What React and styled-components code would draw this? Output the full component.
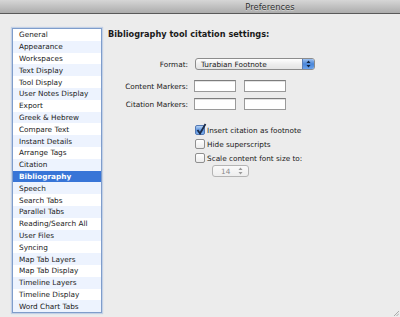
import React from "react";
import styled, { createGlobalStyle } from "styled-components";

const GlobalStyle = createGlobalStyle`
  html, body {
    margin: 0;
    padding: 0;
    background: #ececec;
    font-family: "DejaVu Sans", "Liberation Sans", sans-serif;
  }
  #root {
    width: 400px;
    height: 317px;
    overflow: hidden;
  }
`;

const Window = styled.div`
  width: 400px;
  height: 317px;
  display: flex;
  flex-direction: column;
  background: #ececec;
  position: relative;
`;

const TitleBar = styled.div`
  height: 13px;
  flex: none;
  display: flex;
  justify-content: center;
  align-items: center;
  padding-left: 140px;
  background: linear-gradient(#d6d6d6, #acacac);
  border-bottom: 1px solid #595959;
  font-size: 8.4px;
  color: #2e2e2e;
  text-shadow: 0 1px 0 rgba(255, 255, 255, 0.4);
`;

const Body = styled.div`
  flex: 1;
  display: flex;
  gap: 6px;
  padding: 14px 0 0 12px;
`;

const List = styled.ul`
  list-style: none;
  margin: 0;
  padding: 0;
  width: 88px;
  height: 283px;
  border: 1px solid #7f9dcb;
  box-shadow: 0 0 1px 1px rgba(120, 160, 220, 0.35);
  background: #fff;
  display: flex;
  flex-direction: column;
`;

const Row = styled.li`
  flex: 1;
  display: flex;
  align-items: center;
  padding-left: 6px;
  font-size: 7.3px;
  color: ${(p) => (p.$selected ? "#fff" : "#1a1a1a")};
  font-weight: ${(p) => (p.$selected ? "bold" : "normal")};
  background: ${(p) =>
    p.$selected ? "#3875d7" : p.$odd ? "#edf3fe" : "#fff"};
`;

const Pane = styled.div`
  flex: 1;
  display: flex;
  flex-direction: column;
`;

const Heading = styled.div`
  font-size: 8.2px;
  font-weight: bold;
  color: #1a1a1a;
  margin-top: 1px;
`;

const Form = styled.div`
  display: grid;
  grid-template-columns: 80px auto;
  column-gap: 6px;
  align-items: center;
  margin-top: 19px;
`;

const Label = styled.div`
  font-size: 7.3px;
  color: #1a1a1a;
  text-align: right;
  margin-top: ${(p) => p.$top || 0}px;
`;

const Controls = styled.div`
  display: flex;
  gap: 8px;
  margin-top: ${(p) => p.$top || 0}px;
`;

const Popup = styled.div`
  width: 120px;
  height: 12px;
  box-sizing: border-box;
  border: 1px solid #8c8c8c;
  border-radius: 3px;
  background: linear-gradient(#ffffff, #eeeeee 50%, #e4e4e4);
  display: flex;
  align-items: center;
  justify-content: space-between;
  font-size: 7.3px;
  color: #1a1a1a;
  padding-left: 5px;
  overflow: hidden;
  margin-left: 1px;
`;

const PopupArrows = styled.div`
  width: 11px;
  height: 100%;
  background: linear-gradient(#9dc1f0, #4a86d8 50%, #6aa3ee);
  border-left: 1px solid #5b7fb6;
  display: flex;
  align-items: center;
  justify-content: center;
`;

const Field = styled.div`
  width: 42px;
  height: 12px;
  box-sizing: border-box;
  background: #fff;
  border: 1px solid #9a9a9a;
  border-top-color: #7d7d7d;
  box-shadow: inset 0 1px 0 #e2e2e2;
`;

const Checks = styled.div`
  display: flex;
  flex-direction: column;
  gap: 4px;
  margin: 15px 0 0 87px;
`;

const CheckRow = styled.label`
  display: flex;
  align-items: center;
  gap: 2px;
  font-size: 7.3px;
  color: #1a1a1a;
  height: 10px;
`;

const Box = styled.span`
  width: 10px;
  height: 10px;
  box-sizing: border-box;
  border-radius: 2px;
  border: 1px solid ${(p) => (p.$checked ? "#5479b4" : "#8f8f8f")};
  background: ${(p) =>
    p.$checked
      ? "linear-gradient(#b5d2f4, #5a92de 55%, #7fb0ef)"
      : "linear-gradient(#ffffff, #ececec)"};
  position: relative;
  flex: none;
`;

const Tick = styled.svg`
  position: absolute;
  left: 0px;
  top: -3px;
`;

const Stepper = styled.div`
  align-self: flex-start;
  width: 37px;
  height: 12px;
  box-sizing: border-box;
  border: 1px solid #b4b4b4;
  border-radius: 3px;
  background: linear-gradient(#fafafa, #eeeeee);
  display: flex;
  align-items: center;
  justify-content: space-between;
  padding: 0 5px 0 8px;
  font-size: 7.3px;
  color: #8a8a8a;
  margin: 2px 0 0 104px;
`;

const Grip = styled.svg`
  position: absolute;
  right: 1px;
  bottom: 1px;
`;

const Arrows = ({ color }) => (
  <svg width="5" height="8" viewBox="0 0 5 8">
    <path d="M2.5 0.5 L4.5 3 L0.5 3 Z" fill={color} />
    <path d="M2.5 7.5 L4.5 5 L0.5 5 Z" fill={color} />
  </svg>
);

const items = [
  "General",
  "Appearance",
  "Workspaces",
  "Text Display",
  "Tool Display",
  "User Notes Display",
  "Export",
  "Greek & Hebrew",
  "Compare Text",
  "Instant Details",
  "Arrange Tags",
  "Citation",
  "Bibliography",
  "Speech",
  "Search Tabs",
  "Parallel Tabs",
  "Reading/Search All",
  "User Files",
  "Syncing",
  "Map Tab Layers",
  "Map Tab Display",
  "Timeline Layers",
  "Timeline Display",
  "Word Chart Tabs",
];

const Check = ({ checked, children }) => (
  <CheckRow>
    <Box $checked={checked}>
      {checked && (
        <Tick width="11" height="12" viewBox="0 0 11 12">
          <path
            d="M1.5 7 L4 10.5 L9.5 1"
            fill="none"
            stroke="#1b2c4a"
            strokeWidth="1.8"
          />
        </Tick>
      )}
    </Box>
    {children}
  </CheckRow>
);

export default function App() {
  return (
    <>
      <GlobalStyle />
      <Window>
        <TitleBar>Preferences</TitleBar>
        <Body>
          <List>
            {items.map((name, i) => (
              <Row key={name} $odd={i % 2 === 1} $selected={name === "Bibliography"}>
                {name}
              </Row>
            ))}
          </List>
          <Pane>
            <Heading>Bibliography tool citation settings:</Heading>
            <Form>
              <Label>Format:</Label>
              <Controls>
                <Popup>
                  Turabian Footnote
                  <PopupArrows>
                    <Arrows color="#10233f" />
                  </PopupArrows>
                </Popup>
              </Controls>
              <Label $top={10}>Content Markers:</Label>
              <Controls $top={10}>
                <Field />
                <Field />
              </Controls>
              <Label $top={6}>Citation Markers:</Label>
              <Controls $top={6}>
                <Field />
                <Field />
              </Controls>
            </Form>
            <Checks>
              <Check checked>Insert citation as footnote</Check>
              <Check>Hide superscripts</Check>
              <Check>Scale content font size to:</Check>
            </Checks>
            <Stepper>
              14
              <Arrows color="#9a9a9a" />
            </Stepper>
          </Pane>
        </Body>
        <Grip width="5" height="5" viewBox="0 0 5 5">
          <path d="M5 0 L0 5 M5 2.5 L2.5 5" stroke="#999" strokeWidth="0.8" />
        </Grip>
      </Window>
    </>
  );
}
